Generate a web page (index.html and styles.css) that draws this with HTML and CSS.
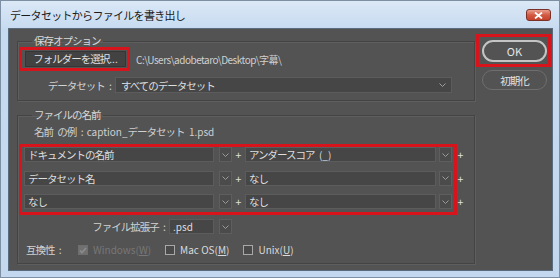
FILE: index.html
```html
<!DOCTYPE html>
<html lang="ja">
<head>
	<meta charset="utf-8">
	<title>データセットからファイルを書き出し</title>
	<link rel="stylesheet" href="styles.css">
</head>
<body>
	<div class="window">
		<header class="titlebar">
			<span class="title">データセットからファイルを書き出し</span>
			<button class="close" aria-label="閉じる">
				<svg width="9" height="7" viewBox="0 0 9 7"><path d="M1 0.5 L8 6.5 M8 0.5 L1 6.5" stroke="#fff" stroke-width="1.8"/></svg>
			</button>
		</header>
		<main class="dialog">
			<div class="groups">
				<fieldset class="group save">
					<legend>保存オプション</legend>
					<div class="folder-row">
						<div class="mark folder-mark"><button class="btn">フォルダーを選択<span class="lat">...</span></button></div>
						<span class="path">C:\Users\adobetaro\Desktop\字幕\</span>
					</div>
					<div class="dataset-row">
						<label class="label dataset-label">データセット :</label>
						<div class="select dataset-select">
							<span>すべてのデータセット</span>
							<svg class="chev" width="7" height="4" viewBox="0 0 7 4"><path d="M0.5 0.5 L3.5 3.5 L6.5 0.5" fill="none" stroke="#a0a0a0"/></svg>
						</div>
					</div>
				</fieldset>
				<fieldset class="group names">
					<legend>ファイルの名前</legend>
					<p class="example">名前 の例 :<span class="lat gap">caption_</span>データセット <span class="lat">1.psd</span></p>
					<div class="mark name-mark">
						<div class="name-row">
							<div class="field wide">ドキュメントの名前</div>
							<div class="chevbox"><svg width="7" height="4" viewBox="0 0 7 4"><path d="M0.5 0.5 L3.5 3.5 L6.5 0.5" fill="none" stroke="#9a9a9a"/></svg></div>
							<span class="plus">+</span>
							<div class="field wide2">アンダースコア <span class="lat">(_)</span></div>
							<div class="chevbox"><svg width="7" height="4" viewBox="0 0 7 4"><path d="M0.5 0.5 L3.5 3.5 L6.5 0.5" fill="none" stroke="#9a9a9a"/></svg></div>
							<span class="plus last">+</span>
						</div>
						<div class="name-row">
							<div class="field wide">データセット名</div>
							<div class="chevbox"><svg width="7" height="4" viewBox="0 0 7 4"><path d="M0.5 0.5 L3.5 3.5 L6.5 0.5" fill="none" stroke="#9a9a9a"/></svg></div>
							<span class="plus">+</span>
							<div class="field wide2">なし</div>
							<div class="chevbox"><svg width="7" height="4" viewBox="0 0 7 4"><path d="M0.5 0.5 L3.5 3.5 L6.5 0.5" fill="none" stroke="#9a9a9a"/></svg></div>
							<span class="plus last">+</span>
						</div>
						<div class="name-row">
							<div class="field wide">なし</div>
							<div class="chevbox"><svg width="7" height="4" viewBox="0 0 7 4"><path d="M0.5 0.5 L3.5 3.5 L6.5 0.5" fill="none" stroke="#9a9a9a"/></svg></div>
							<span class="plus">+</span>
							<div class="field wide2">なし</div>
							<div class="chevbox"><svg width="7" height="4" viewBox="0 0 7 4"><path d="M0.5 0.5 L3.5 3.5 L6.5 0.5" fill="none" stroke="#9a9a9a"/></svg></div>
							<span class="plus last">+</span>
						</div>
					</div>
					<div class="ext-row">
						<label class="label ext-label">ファイル拡張子 :</label>
						<div class="field ext lat">.psd</div>
						<div class="chevbox"><svg width="7" height="4" viewBox="0 0 7 4"><path d="M0.5 0.5 L3.5 3.5 L6.5 0.5" fill="none" stroke="#9a9a9a"/></svg></div>
					</div>
					<div class="compat-row">
						<span class="label compat-label">互換性 :</span>
						<span class="check disabled"><svg width="8" height="7" viewBox="0 0 8 7"><path d="M1 3.5 L3 5.5 L7 1" fill="none" stroke="#8c8c8c" stroke-width="1.6"/></svg></span>
						<span class="check-text lat disabled">Windows(<u>W</u>)</span>
						<span class="check"></span>
						<span class="check-text lat">Mac OS(<u>M</u>)</span>
						<span class="check"></span>
						<span class="check-text lat">Unix(<u>U</u>)</span>
					</div>
				</fieldset>
			</div>
			<div class="actions">
				<div class="mark ok-mark"><button class="pill ok lat">OK</button></div>
				<button class="pill reset">初期化</button>
			</div>
		</main>
	</div>
</body>
</html>
```

FILE: styles.css
```css
/* fonts */
body {
	font-family: "Noto Sans CJK JP", "Noto Sans", sans-serif;
	font-size: 10.5px;
	letter-spacing: -1px;
	word-spacing: 3px;
}

.title {
	font-size: 11px;
	letter-spacing: -0.7px;
}

.lat {
	font-size: 10px;
	letter-spacing: 0;
	word-spacing: 0;
}

.path {
	font-size: 10px;
	letter-spacing: -0.5px;
}

.ok {
	font-size: 11px;
}

/* layout */
body {
	margin: 0;
}

.window {
	width: 560px;
	height: 278px;
	box-sizing: border-box;
	display: flex;
	flex-direction: column;
}

.titlebar {
	height: 27px;
	display: flex;
	align-items: flex-start;
	padding: 0 8px 0 9px;
	box-sizing: border-box;
}

.title {
	line-height: 14px;
	margin-top: 7px;
}

.close {
	margin-left: auto;
	margin-top: 8px;
	width: 25px;
	height: 12px;
	padding: 0;
	display: flex;
	align-items: center;
	justify-content: center;
}

.dialog {
	margin: 0 6px 6px 7px;
	flex: 1;
	display: flex;
	padding: 5px 0 0 8px;
}

.groups {
	width: 458px;
	padding-top: 1px;
}

.group {
	margin: 0;
	padding: 0 1px 7px;
	min-width: 0;
}

.group legend {
	line-height: 12px;
	margin-left: 13px;
	padding: 0 2px;
}

.group.names {
	margin-top: 8px;
	padding-bottom: 6px;
}

.mark {
	border: 3px solid;
	box-sizing: border-box;
}

.folder-row {
	display: flex;
	align-items: center;
}

.folder-mark {
	width: 111px;
	height: 24px;
	padding: 1px 1px 1px 3px;
}

.btn {
	width: 100%;
	height: 100%;
	padding: 0;
	font: inherit;
	letter-spacing: inherit;
	line-height: 14px;
}

.path {
	margin-left: 6px;
}

.dataset-row {
	display: flex;
	align-items: center;
	margin-top: 6px;
}

.dataset-label {
	width: 92px;
	text-align: right;
	margin-right: 4px;
}

.select {
	height: 16px;
	box-sizing: border-box;
	display: flex;
	align-items: center;
	padding: 0 5px 0 5px;
}

.dataset-select {
	width: 337px;
}

.chev {
	margin-left: auto;
}

.example {
	margin: 4px 0 0 15px;
	line-height: 14px;
}

.example .gap {
	margin-left: 4px;
}

.name-mark {
	width: 438px;
	height: 71px;
	margin-top: 5px;
	padding-left: 2px;
	display: flex;
	flex-direction: column;
	gap: 8.5px;
}

.name-row {
	display: flex;
	height: 15px;
}

.field {
	height: 15px;
	box-sizing: border-box;
	padding: 0 3px;
	line-height: 13px;
	flex-shrink: 0;
	white-space: nowrap;
}

.wide {
	width: 190px;
}

.wide2 {
	width: 191px;
}

.chevbox {
	width: 13px;
	height: 15px;
	box-sizing: border-box;
	margin-left: 5px;
	display: flex;
	align-items: center;
	justify-content: center;
	flex-shrink: 0;
}

.wide2 + .chevbox {
	margin-left: 3px;
}

.plus {
	width: 13px;
	text-align: center;
	line-height: 15px;
	letter-spacing: 0;
	flex-shrink: 0;
}

.plus.last {
	width: 15px;
	margin-left: 1px;
}

.ext-row {
	display: flex;
	margin-top: 4px;
	height: 15px;
}

.ext-label {
	width: 146px;
	text-align: right;
	margin-right: 4px;
	line-height: 15px;
}

.field.ext {
	width: 45px;
}

.compat-row {
	display: flex;
	align-items: center;
	margin-top: 9px;
	padding-left: 7px;
	line-height: 14px;
}

.compat-label {
	width: 52px;
}

.check {
	width: 10px;
	height: 10px;
	box-sizing: border-box;
	display: flex;
	align-items: center;
	justify-content: center;
}

.check-text {
	margin: 0 14px 0 5px;
}

.check-text u {
	text-underline-offset: 1px;
}

.actions {
	display: flex;
	flex-direction: column;
	width: 75px;
	margin-left: 1px;
}

.ok-mark {
	height: 33px;
	padding: 3px 1px 2px 3px;
}

.pill {
	font: inherit;
	letter-spacing: inherit;
	padding: 0;
	border-radius: 11px;
	width: 65px;
}

.ok {
	height: 22px;
	font-size: 11px;
	letter-spacing: 0;
}

.reset {
	height: 20px;
	margin: 3px 0 0 6px;
}

/* colors */
body {
	background-color: #c9dcf0;
}

.window {
	background: linear-gradient(#dbe8f6, #c5d9ef 30px, #c3d8ee);
	border: 1px solid #7d8fa3;
	color: #d2d2d2;
}

.title {
	color: #1a1a1a;
}

.close {
	border: 1px solid #7a3128;
	border-radius: 3px;
	background: linear-gradient(#e9a08f, #d35a43 50%, #c6412b);
}

.dialog {
	background-color: #535353;
	border: 1px solid #5a6b7d;
}

.group {
	border: 1px solid #444;
	box-shadow: inset 1px 1px 0 #5e5e5e, 1px 1px 0 #5e5e5e;
}

.group legend {
	color: #d8d8d8;
}

.mark {
	border-color: #d7141c;
}

.btn {
	background-color: #424242;
	border: 1px solid #363636;
	color: #e0e0e0;
}

.path,
.example {
	color: #cfcfcf;
}

.select,
.field {
	background-color: #464646;
	border: 1px solid #5c5c5c;
	color: #dedede;
}

.chevbox {
	background-color: #4b4b4b;
	border: 1px solid #5e5e5e;
}

.plus {
	color: #e0e0e0;
}

.check {
	border: 1px solid #a8a8a8;
	background-color: #4a4a4a;
}

.check.disabled {
	border-color: #6e6e6e;
	background-color: #707070;
}

.check-text {
	color: #dadada;
}

.check-text.disabled {
	color: #777;
}

.pill {
	background-color: #535353;
	color: #e4e4e4;
}

.ok {
	border: 2px solid #c4c4c4;
}

.reset {
	border: 1px solid #6e6e6e;
}
```
